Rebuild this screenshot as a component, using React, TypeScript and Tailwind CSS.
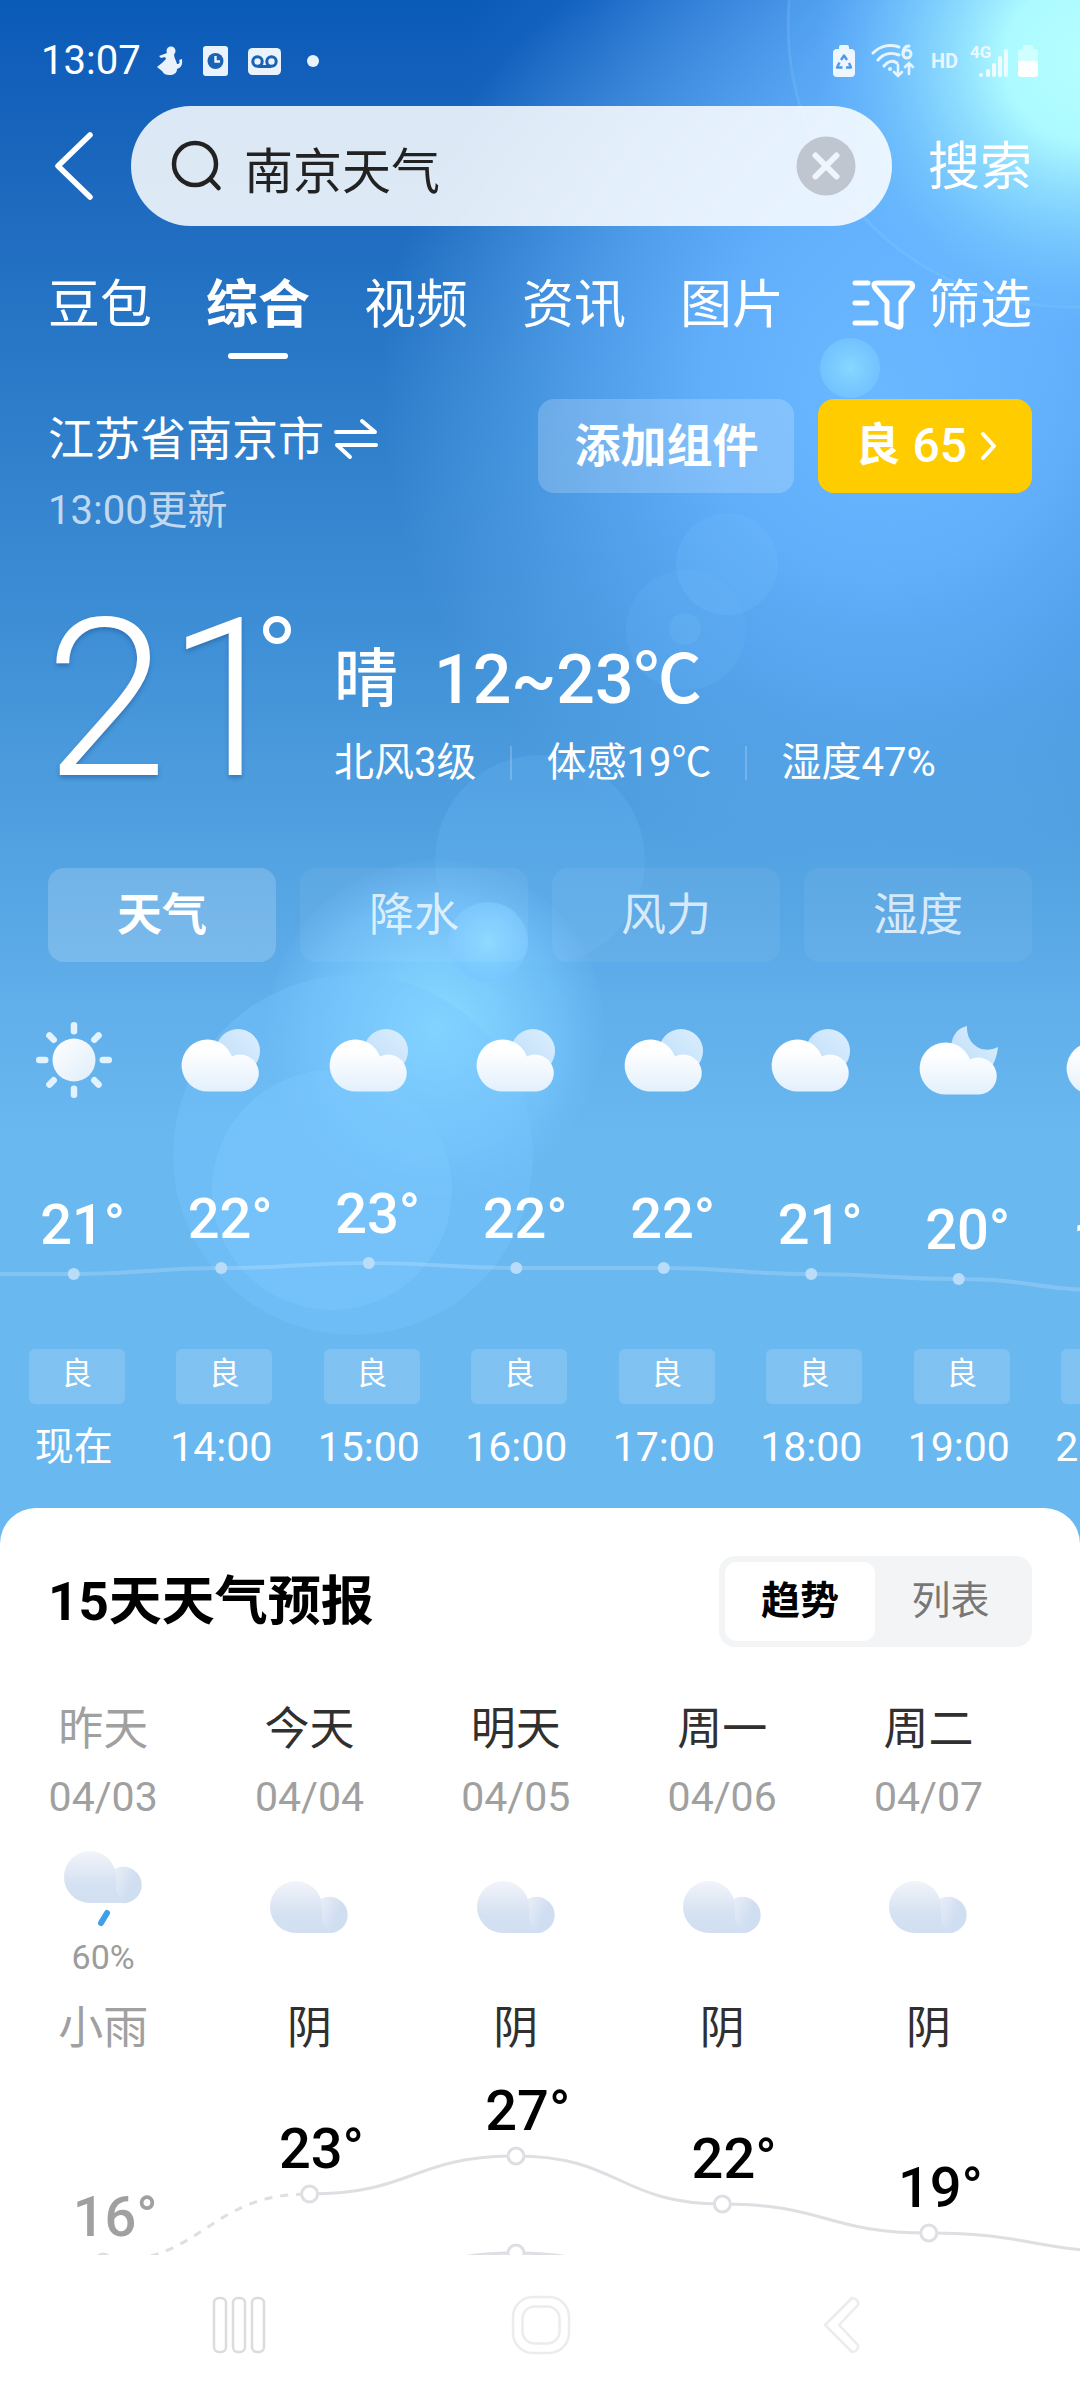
import React, { useState } from "react";

type HourIcon = "sun" | "cloudy" | "night";

const hours: { time: string; temp: number; icon: HourIcon; air: string }[] = [
  { time: "现在", temp: 21, icon: "sun", air: "良" },
  { time: "14:00", temp: 22, icon: "cloudy", air: "良" },
  { time: "15:00", temp: 23, icon: "cloudy", air: "良" },
  { time: "16:00", temp: 22, icon: "cloudy", air: "良" },
  { time: "17:00", temp: 22, icon: "cloudy", air: "良" },
  { time: "18:00", temp: 21, icon: "cloudy", air: "良" },
  { time: "19:00", temp: 20, icon: "night", air: "良" },
  { time: "20:00", temp: 18, icon: "night", air: "良" },
];

const days = [
  { name: "昨天", date: "04/03", text: "小雨", high: 16, low: 11, rain: "60%", past: true },
  { name: "今天", date: "04/04", text: "阴", high: 23, low: 12 },
  { name: "明天", date: "04/05", text: "阴", high: 27, low: 17 },
  { name: "周一", date: "04/06", text: "阴", high: 22, low: 12 },
  { name: "周二", date: "04/07", text: "阴", high: 19, low: 11 },
  { name: "周三", date: "04/08", text: "阴", high: 17, low: 10 },
];

const tabs = ["豆包", "综合", "视频", "资讯", "图片"];
const metrics = ["天气", "降水", "风力", "湿度"];

const HOUR_W = 147.5;
const DAY_W = 206.4;

const hourY = (t: number) => Math.round(158 + (22 - t) * 5.5);
const dayY = (t: number) => Math.round(99 + (27 - t) * 9.6);

function smooth(points: [number, number][]) {
  return points
    .map(([x, y], i) => {
      if (i === 0) return `M${x} ${y}`;
      const [px, py] = points[i - 1];
      const m = (px + x) / 2;
      return `C${m} ${py} ${m} ${y} ${x} ${y}`;
    })
    .join(" ");
}

function Sky() {
  return (
    <svg
      aria-hidden="true"
      className="absolute inset-x-0 top-0 h-[1560px] w-full"
      viewBox="0 0 1080 1560"
      preserveAspectRatio="xMaxYMin slice"
    >
      <defs>
        <linearGradient id="sky" x1="0" y1="0" x2="0" y2="1">
          <stop offset="0" stopColor="#0a5ab8" />
          <stop offset="0.1" stopColor="#1a66bd" />
          <stop offset="0.24" stopColor="#2a7ac8" />
          <stop offset="0.4" stopColor="#3e8ed6" />
          <stop offset="0.53" stopColor="#50a0e0" />
          <stop offset="0.64" stopColor="#60aeea" />
          <stop offset="0.73" stopColor="#6ab8f0" />
          <stop offset="1" stopColor="#69b8f1" />
        </linearGradient>
        <radialGradient id="halo">
          <stop offset="0" stopColor="#6ab8ff" />
          <stop offset="0.35" stopColor="#66b4ff" stopOpacity="0.9" />
          <stop offset="0.6" stopColor="#62b0fa" stopOpacity="0.62" />
          <stop offset="0.85" stopColor="#60aef4" stopOpacity="0.25" />
          <stop offset="1" stopColor="#60aef4" stopOpacity="0" />
        </radialGradient>
        <radialGradient id="beam">
          <stop offset="0" stopColor="#62b2ff" />
          <stop offset="0.35" stopColor="#5caaff" stopOpacity="0.9" />
          <stop offset="0.6" stopColor="#4c98f2" stopOpacity="0.5" />
          <stop offset="0.8" stopColor="#4490ea" stopOpacity="0.18" />
          <stop offset="1" stopColor="#4490ea" stopOpacity="0" />
        </radialGradient>
        <radialGradient id="star">
          <stop offset="0" stopColor="#b4ffff" />
          <stop offset="0.3" stopColor="#acfaff" />
          <stop offset="0.6" stopColor="#8cdcff" stopOpacity="0.7" />
          <stop offset="1" stopColor="#6cbcff" stopOpacity="0" />
        </radialGradient>
        <radialGradient id="glow">
          <stop offset="0" stopColor="#8adcff" />
          <stop offset="0.4" stopColor="#80d0ff" stopOpacity="0.85" />
          <stop offset="0.75" stopColor="#78c8ff" stopOpacity="0.55" />
          <stop offset="1" stopColor="#72c0fc" stopOpacity="0.08" />
        </radialGradient>
        <radialGradient id="spot">
          <stop offset="0" stopColor="#88d8ff" />
          <stop offset="1" stopColor="#78c6ff" stopOpacity="0.75" />
        </radialGradient>
      </defs>
      <rect width="1080" height="1560" fill="url(#sky)" />
      <circle cx="1080" cy="110" r="620" fill="url(#beam)" />
      <circle cx="880" cy="390" r="500" fill="url(#halo)" />
      <circle cx="1070" cy="25" r="282" fill="#6cc0ff" fillOpacity="0.14" stroke="#a8dcff" strokeOpacity="0.16" strokeWidth="3" />
      <circle cx="1085" cy="60" r="270" fill="url(#star)" />
      <circle cx="850" cy="368" r="30" fill="url(#spot)" />
      <circle cx="727" cy="564" r="51" fill="#78c0ff" fillOpacity="0.22" />
      <circle cx="686" cy="630" r="60" fill="#78c0ff" fillOpacity="0.14" />
      <circle cx="685" cy="629" r="16" fill="#80c8ff" fillOpacity="0.16" />
      <circle cx="540" cy="860" r="105" fill="#70bcf4" fillOpacity="0.22" />
      <circle cx="436" cy="1028" r="168" fill="url(#glow)" />
      <circle cx="353" cy="1155" r="180" fill="#78c6ff" fillOpacity="0.4" />
      <circle cx="332" cy="1190" r="120" fill="#7ccaff" fillOpacity="0.4" />
      <circle cx="488" cy="942" r="40" fill="url(#spot)" />
    </svg>
  );
}

function CloudDefs() {
  return (
    <svg aria-hidden="true" className="absolute h-0 w-0">
      <defs>
        <linearGradient id="white" x1="0" y1="0" x2="0" y2="1">
          <stop offset="0.2" stopColor="#ffffff" />
          <stop offset="1" stopColor="#e2f0fc" />
        </linearGradient>
        <linearGradient id="veil" x1="0" y1="1" x2="1" y2="0">
          <stop offset="0" stopColor="#bcdcf8" />
          <stop offset="1" stopColor="#dceffe" />
        </linearGradient>
        <linearGradient id="sunFill" x1="0" y1="0" x2="1" y2="1">
          <stop offset="0" stopColor="#ffffff" />
          <stop offset="1" stopColor="#deedfa" />
        </linearGradient>
        <linearGradient id="grayBig" x1="0" y1="0" x2="0" y2="1">
          <stop offset="0" stopColor="#f2f4f9" />
          <stop offset="0.65" stopColor="#d4e1f2" />
          <stop offset="1" stopColor="#d2dff1" />
        </linearGradient>
        <linearGradient id="graySmall" x1="0" y1="0.2" x2="0.9" y2="0.6">
          <stop offset="0.05" stopColor="#edf1f8" />
          <stop offset="0.8" stopColor="#d0def1" />
        </linearGradient>
      </defs>
    </svg>
  );
}

const CLOUD = "M26 52A26 26 0 1 1 50 17A18.5 18.5 0 1 1 59.500 52Z";

function HourGlyph({ kind }: { kind: HourIcon }) {
  if (kind === "sun") {
    return (
      <svg aria-hidden="true" className="h-[100px] w-[100px]" viewBox="0 0 100 100">
        <circle cx="50" cy="50" r="21.500" fill="url(#sunFill)" />
        {[0, 45, 90, 135, 180, 225, 270, 315].map((a) => (
          <rect key={a} x="46.750" y="12" width="6.500" height="12.500" rx="3.200" fill="#e2f2ff" transform={`rotate(${a} 50 50)`} />
        ))}
      </svg>
    );
  }
  return (
    <svg aria-hidden="true" className="h-[100px] w-[100px]" viewBox="0 0 100 100">
      {kind === "cloudy" ? (
        <circle cx="67" cy="41" r="22" fill="url(#veil)" />
      ) : (
        <path d="M58 16C44 19 40 34 43 46L71 66C83 62 88 48 89 37C73 45 57 34 58 16Z" fill="url(#veil)" />
      )}
      <g transform={kind === "cloudy" ? "translate(11 29.500)" : "translate(11 32.500)"}>
        <path d={CLOUD} fill="url(#white)" />
      </g>
    </svg>
  );
}

function DayGlyph({ rain }: { rain?: string }) {
  return (
    <>
      <svg
        aria-hidden="true"
        className={rain ? "h-[80px] w-[78px] shrink-0" : "h-[52px] w-[78px]"}
        viewBox={rain ? "0 0 78 80" : "0 0 78 52"}
      >
        <circle cx="59.500" cy="34" r="18.200" fill="url(#graySmall)" />
        <path d="M26 52A26 26 0 1 1 52 26C53 35 50 40 56 46L64 51.600L59.500 52Z" fill="url(#grayBig)" />
        {rain && <path d="M43 62L37 72" stroke="#3fa0e8" strokeWidth="6" strokeLinecap="round" />}
      </svg>
      {rain && <span className="mt-2 text-[34px] leading-9 text-[#9c9c9c]">{rain}</span>}
    </>
  );
}

function StatusBar() {
  return (
    <div className="flex h-[106px] items-center pt-4 pr-10 pl-[41px] text-white">
      <span className="text-[40px] leading-none">13:07</span>
      <div className="ml-[16px] flex items-center gap-[20px]">
        <svg aria-hidden="true" className="h-[30px] w-[26px]" viewBox="0 0 26 30" fill="#eaf3fc">
          <circle cx="14" cy="5" r="4.500" />
          <path d="M10 7L17 8C17 12 19 14 20 18C23 18 23 16 22 14L25 13C26 20 23 22 20 23C20 27 17 29 12 29C7 29 6 26 5 25L0 21L5 17L9 13L8 11L4 12L2 10Z" />
        </svg>
        <svg aria-hidden="true" className="h-[30px] w-[25px]" viewBox="0 0 25 30">
          <rect width="25" height="30" rx="3" fill="#eaf3fc" />
          <circle cx="12.500" cy="15" r="8" fill="#1a62b4" />
          <path d="M12.500 10V15.500H17" fill="none" stroke="#eaf3fc" strokeWidth="2.400" />
        </svg>
        <svg aria-hidden="true" className="h-[27px] w-[33px]" viewBox="0 0 33 27">
          <rect width="33" height="27" rx="4.500" fill="#eaf3fc" />
          <g fill="none" stroke="#1a62b4" strokeWidth="3">
            <circle cx="9.500" cy="13.500" r="4.700" />
            <circle cx="23.500" cy="13.500" r="4.700" />
            <path d="M10 18.500H23" />
          </g>
        </svg>
        <span className="ml-1.5 h-3 w-3 rounded-full bg-[#eaf3fc]" />
      </div>
      <div className="ml-auto flex items-center">
        <svg aria-hidden="true" className="h-[32px] w-[22px]" viewBox="0 0 22 32">
          <path d="M6 4V2Q6 0 8 0H14Q16 0 16 2V4H18Q22 4 22 8V28Q22 32 18 32H4Q0 32 0 28V8Q0 4 4 4Z" fill="#eef7ff" />
          <path d="M8 15L11 10.500L14 15M16 18L18 22.500H13M9.500 22.500H4L6.500 17.500" fill="none" stroke="#4f97ee" strokeWidth="2.400" strokeLinejoin="round" />
        </svg>
        <svg aria-hidden="true" className="ml-4 h-[34px] w-[44px]" viewBox="0 0 44 34" fill="none" stroke="#e6f4ff" strokeWidth="3" strokeLinecap="round">
          <path d="M2 9C10 1 20 0 28 3M7 16C13 9 21 8 28 11M13 22C17 17 22 16 26 19" />
          <circle cx="19" cy="25" r="2" fill="#e6f4ff" stroke="none" />
          <path d="M38 2C33 2 32 6 32 10" />
          <circle cx="36" cy="10" r="4" />
          <path d="M27 21V32M23 28L27 32L31 28M38 30V19M34 23L38 19L42 23" strokeWidth="2.600" />
        </svg>
        <span className="ml-4 text-[20px] leading-none font-bold text-[#eaf6ff]">HD</span>
        <div className="relative ml-3 h-[34px] w-[40px]">
          <span className="absolute top-0 left-0 text-[17px] leading-none font-bold text-[#eafaff]">4G</span>
          <svg aria-hidden="true" className="absolute inset-0 h-full w-full" viewBox="0 0 40 34" fill="#eefcff">
            <rect x="9" y="29" width="4" height="4" rx="2" />
            <rect x="16" y="25" width="4" height="8" rx="2" />
            <rect x="22" y="19" width="4" height="14" rx="2" />
            <rect x="28" y="12" width="4" height="21" rx="2" />
            <rect x="34" y="5" width="4" height="28" rx="2" />
          </svg>
        </div>
        <svg aria-hidden="true" className="mr-0.5 ml-2 h-[32px] w-[20px]" viewBox="0 0 20 32">
          <path d="M5 4V2Q5 0 7 0H13Q15 0 15 2V4H17Q20 4 20 7V16H0V7Q0 4 3 4Z" fill="#d0ffff" />
          <path d="M0 16H20V29Q20 32 17 32H3Q0 32 0 29Z" fill="#ffffff" />
        </svg>
      </div>
    </div>
  );
}

function SearchRow() {
  const [query, setQuery] = useState("南京天气");
  return (
    <div className="flex items-center pr-[48px]">
      <button aria-label="返回" className="flex w-[131px] shrink-0 items-center pl-[52px]">
        <svg aria-hidden="true" className="h-[72px] w-[44px]" viewBox="0 0 44 72" fill="none" stroke="#fff" strokeWidth="5.500" strokeLinecap="round" strokeLinejoin="round">
          <path d="M38 5L6 36L38 67" />
        </svg>
      </button>
      <div className="flex h-[120px] min-w-0 flex-1 items-center rounded-full bg-white/85 pr-[36px] pl-[40px]">
        <svg aria-hidden="true" className="h-[52px] w-[52px] shrink-0" viewBox="0 0 52 52" fill="none" stroke="#222" strokeWidth="4.500" strokeLinecap="round">
          <circle cx="24" cy="24" r="21" />
          <path d="M39.500 39.500L47.500 48" />
        </svg>
        <input
          aria-label="搜索内容"
          value={query}
          onChange={(e) => setQuery(e.target.value)}
          className="ml-[21px] h-[80px] min-w-0 flex-1 bg-transparent pt-0.5 text-[49px] text-[#222] outline-none"
        />
        <button aria-label="清除" onClick={() => setQuery("")} className="shrink-0">
          <svg aria-hidden="true" className="h-[60px] w-[60px]" viewBox="0 0 60 60">
            <circle cx="30" cy="30" r="29.500" fill="#c0c6d0" />
            <path d="M19.500 19.500L40.500 40.500M40.500 19.500L19.500 40.500" stroke="#eef5fc" strokeWidth="6" strokeLinecap="round" />
          </svg>
        </button>
      </div>
      <button className="ml-[36px] shrink-0 pt-1 text-[52px] leading-[60px] text-white">搜索</button>
    </div>
  );
}

function TabRow() {
  return (
    <nav className="flex items-start pt-[52px] pr-[48px] pl-[48px] text-[52px] leading-[56px] text-white">
      <div className="flex gap-[54px]">
        {tabs.map((t) => (
          <a key={t} href="#" className={t === "综合" ? "flex flex-col items-center font-bold" : "flex flex-col items-center"}>
            {t}
            {t === "综合" && <span className="mt-[19px] h-[6px] w-[60px] rounded-full bg-white" />}
          </a>
        ))}
      </div>
      <button className="ml-auto flex items-center">
        <svg aria-hidden="true" className="mr-[12px] h-[52px] w-[64px]" viewBox="0 0 64 52" fill="none" stroke="#fff" strokeWidth="5" strokeLinecap="round" strokeLinejoin="round">
          <path d="M3 3H16M3 23H15M3 43H24" />
          <path d="M25 3H57Q62 3 60 8L49 22V44Q49 48 46 47L37 43.500Q35 43 35 41V22L23 8Q20 3 25 3Z" />
        </svg>
        筛选
      </button>
    </nav>
  );
}

function Current() {
  return (
    <section className="text-white">
      <div className="mt-10 flex items-start pr-[48px] pl-[48px]">
        <div className="pt-[10px]">
          <button className="flex items-center text-[46px] leading-[60px]">
            江苏省南京市
            <svg aria-hidden="true" className="ml-2.5 h-[42px] w-[44px]" viewBox="0 0 44 42" fill="none" stroke="#fff" strokeWidth="4" strokeLinecap="round" strokeLinejoin="round">
              <path d="M2 14H41L28 3M42 27H3L16 39" />
            </svg>
          </button>
          <p className="mt-[22px] text-[40px] leading-10 text-white/70">13:00更新</p>
        </div>
        <button className="ml-auto h-[94px] rounded-2xl bg-white/20 px-[36px] text-[46px] font-bold">添加组件</button>
        <button className="ml-6 flex h-[94px] items-center rounded-2xl bg-[#ffcc00] pr-[34px] pl-[37px] font-medium">
          <span className="text-[45px] font-bold">良</span>
          <span className="ml-[12px] text-[48px]">65</span>
          <svg aria-hidden="true" className="ml-[13px] h-[30px] w-[18px]" viewBox="0 0 18 30" fill="none" stroke="#fff" strokeWidth="4" strokeLinecap="round" strokeLinejoin="round">
            <path d="M3 3L14 15L3 27" />
          </svg>
        </button>
      </div>

      <div className="mt-[58px] flex items-start pl-[45px]">
        <div className="flex w-[289px] shrink-0 items-start text-shadow-[0_3px_4px_rgba(30,80,140,0.45)]">
          <span className="text-[220px] leading-[222px] font-light">21</span>
          <span className="mt-[27px] -ml-[26px] h-[28px] w-[28px] rounded-full border-[6px] border-white" role="img" aria-label="度" />
        </div>
        <div className="pt-[51px] whitespace-nowrap">
          <div className="flex h-[80px] items-center gap-[36px] font-medium">
            <span className="text-[64px]">晴</span>
            <span className="text-[68px]">12~23℃</span>
          </div>
          <ul className="mt-[19px] flex items-center text-[40px] leading-[48px]">
            <li>北风3级</li>
            <li className="ml-[34px] border-l-2 border-white/20 pl-[34px] leading-[34px]">体感19℃</li>
            <li className="ml-[34px] border-l-2 border-white/20 pl-[34px] leading-[34px]">湿度47%</li>
          </ul>
        </div>
      </div>

      <div role="tablist" className="mt-[57px] grid grid-cols-4 gap-6 px-[48px]">
        {metrics.map((m, i) => (
          <button
            key={m}
            role="tab"
            aria-selected={i === 0}
            className={
              i === 0
                ? "h-[94px] rounded-2xl bg-white/18 pt-0.5 text-[45px] font-bold"
                : "h-[94px] rounded-2xl bg-white/5 pt-0.5 text-[45px] text-white/75"
            }
          >
            {m}
          </button>
        ))}
      </div>
    </section>
  );
}

function Hourly() {
  const pts = hours.map((h, i): [number, number] => [HOUR_W * (i + 0.5), hourY(h.temp)]);
  return (
    <section className="overflow-hidden pt-[48px] text-white">
      <div className="relative grid w-[1180px] grid-cols-8">
        <svg aria-hidden="true" className="absolute top-[100px] left-0 h-[239px] w-[1180px]" viewBox="0 0 1180 239">
          <path d={smooth([[-74, pts[0][1]], ...pts])} fill="none" stroke="#fff" strokeOpacity="0.18" strokeWidth="4" />
          {pts.map(([x, y]) => (
            <circle key={x} cx={x} cy={y} r="6" fill="#b8dcf9" />
          ))}
        </svg>
        {hours.map((h) => (
          <div key={h.time} className="flex flex-col items-center">
            <HourGlyph kind={h.icon} />
            <div className="h-[239px] pl-[18px]">
              <div className="text-[56px] leading-[64px] font-medium" style={{ marginTop: hourY(h.temp) - 81 }}>
                {h.temp}°
              </div>
            </div>
            <span className="ml-1.5 flex h-[55px] w-[96px] items-center justify-center rounded-md bg-white/15 pb-1 text-[31px]">{h.air}</span>
            <span className={h.time === "现在" ? "mt-[19px] text-[39px] leading-[48px]" : "mt-[19px] text-[41px] leading-[48px]"}>{h.time}</span>
          </div>
        ))}
      </div>
    </section>
  );
}

function Forecast() {
  const high = days.map((d, i): [number, number] => [DAY_W * (i + 0.5), dayY(d.high)]);
  const low = days.map((d, i): [number, number] => [DAY_W * (i + 0.5), 196 + (17 - d.low) * 7]);
  return (
    <section className="mt-[37px] flex flex-col rounded-t-[36px] bg-white pt-12">
      <header className="flex items-center justify-between px-[48px]">
        <h2 className="pt-0.5 text-[53px] font-bold text-black">15天天气预报</h2>
        <div role="tablist" className="flex h-[91px] w-[313px] rounded-2xl bg-[#f3f4f6] p-[6px] text-[39px]">
          <button role="tab" aria-selected="true" className="w-[150px] rounded-xl bg-white font-bold text-black">
            趋势
          </button>
          <button role="tab" aria-selected="false" className="flex-1 text-[#777]">
            列表
          </button>
        </div>
      </header>
      <div className="overflow-hidden">
        <div className="relative mt-[51px] grid w-[1238px] grid-cols-6">
          {days.map((d) => (
            <div key={d.name} className={d.past ? "flex flex-col items-center text-[#a0a0a0]" : "flex flex-col items-center text-[#303030]"}>
              <span className="text-[45px] leading-[64px]">{d.name}</span>
              <span className="mt-[11px] text-[41px] leading-[48px] text-[#a0a0a0]">{d.date}</span>
              <div className={d.rain ? "flex h-[172px] flex-col items-center justify-center pt-3" : "flex h-[172px] flex-col items-center justify-center"}>
                <DayGlyph rain={d.rain} />
              </div>
              <span className="mt-1 text-[45px] leading-[64px]">{d.text}</span>
              <div className="h-[194px] pl-6">
                <div
                  className={d.past ? "text-[56px] leading-[64px] font-medium text-[#a0a0a0]" : "text-[56px] leading-[64px] font-medium text-black"}
                  style={{ marginTop: dayY(d.high) - 81 }}
                >
                  {d.high}°
                </div>
              </div>
            </div>
          ))}
          <svg aria-hidden="true" className="absolute bottom-0 left-0 h-[198px] w-[1238px]" viewBox="0 0 1238 198">
            <g fill="none" stroke="#dedfe3" strokeWidth="3">
              <path d={smooth(high.slice(0, 2))} strokeDasharray="8 8" />
              <path d={smooth(high.slice(1))} />
              <path d={smooth(low)} />
              {[...high, ...low].map(([x, y], i) => (
                <circle key={i} cx={x} cy={y} r="8" fill="#fff" />
              ))}
            </g>
          </svg>
        </div>
      </div>
    </section>
  );
}

function NavBar() {
  return (
    <nav className="grid h-[145px] grid-cols-3 items-center bg-white pr-[88px] pb-1.5 pl-[90px]">
      <button aria-label="最近任务" className="flex justify-center">
        <svg aria-hidden="true" className="h-[60px] w-[56px]" viewBox="0 0 56 60" fill="none" stroke="#dcdcdc" strokeWidth="2.500">
          <rect x="2" y="3" width="12" height="54" rx="5" />
          <rect x="21" y="3" width="12" height="54" rx="5" />
          <rect x="40" y="3" width="12" height="54" rx="5" />
        </svg>
      </button>
      <button aria-label="主屏幕" className="flex justify-center">
        <svg aria-hidden="true" className="h-[60px] w-[60px]" viewBox="0 0 60 60" fill="none" stroke="#ececec" strokeWidth="2.500">
          <rect x="2" y="2" width="56" height="56" rx="20" />
          <rect x="11.500" y="11.500" width="37" height="37" rx="12" />
        </svg>
      </button>
      <button aria-label="后退" className="flex justify-center">
        <svg aria-hidden="true" className="h-[60px] w-[38px]" viewBox="0 0 38 60" fill="none" stroke="#ececec" strokeWidth="2.500" strokeLinejoin="round">
          <path d="M29 3L2 30L29 57Q36 56 35 50L16 30L35 10Q36 4 29 3Z" />
        </svg>
      </button>
    </nav>
  );
}

export default function App() {
  return (
    <div className="relative overflow-hidden bg-white font-[Roboto,'Noto_Sans_CJK_SC',sans-serif]">
      <Sky />
      <CloudDefs />
      <main className="relative">
        <StatusBar />
        <SearchRow />
        <TabRow />
        <Current />
        <Hourly />
        <Forecast />
        <NavBar />
      </main>
    </div>
  );
}
